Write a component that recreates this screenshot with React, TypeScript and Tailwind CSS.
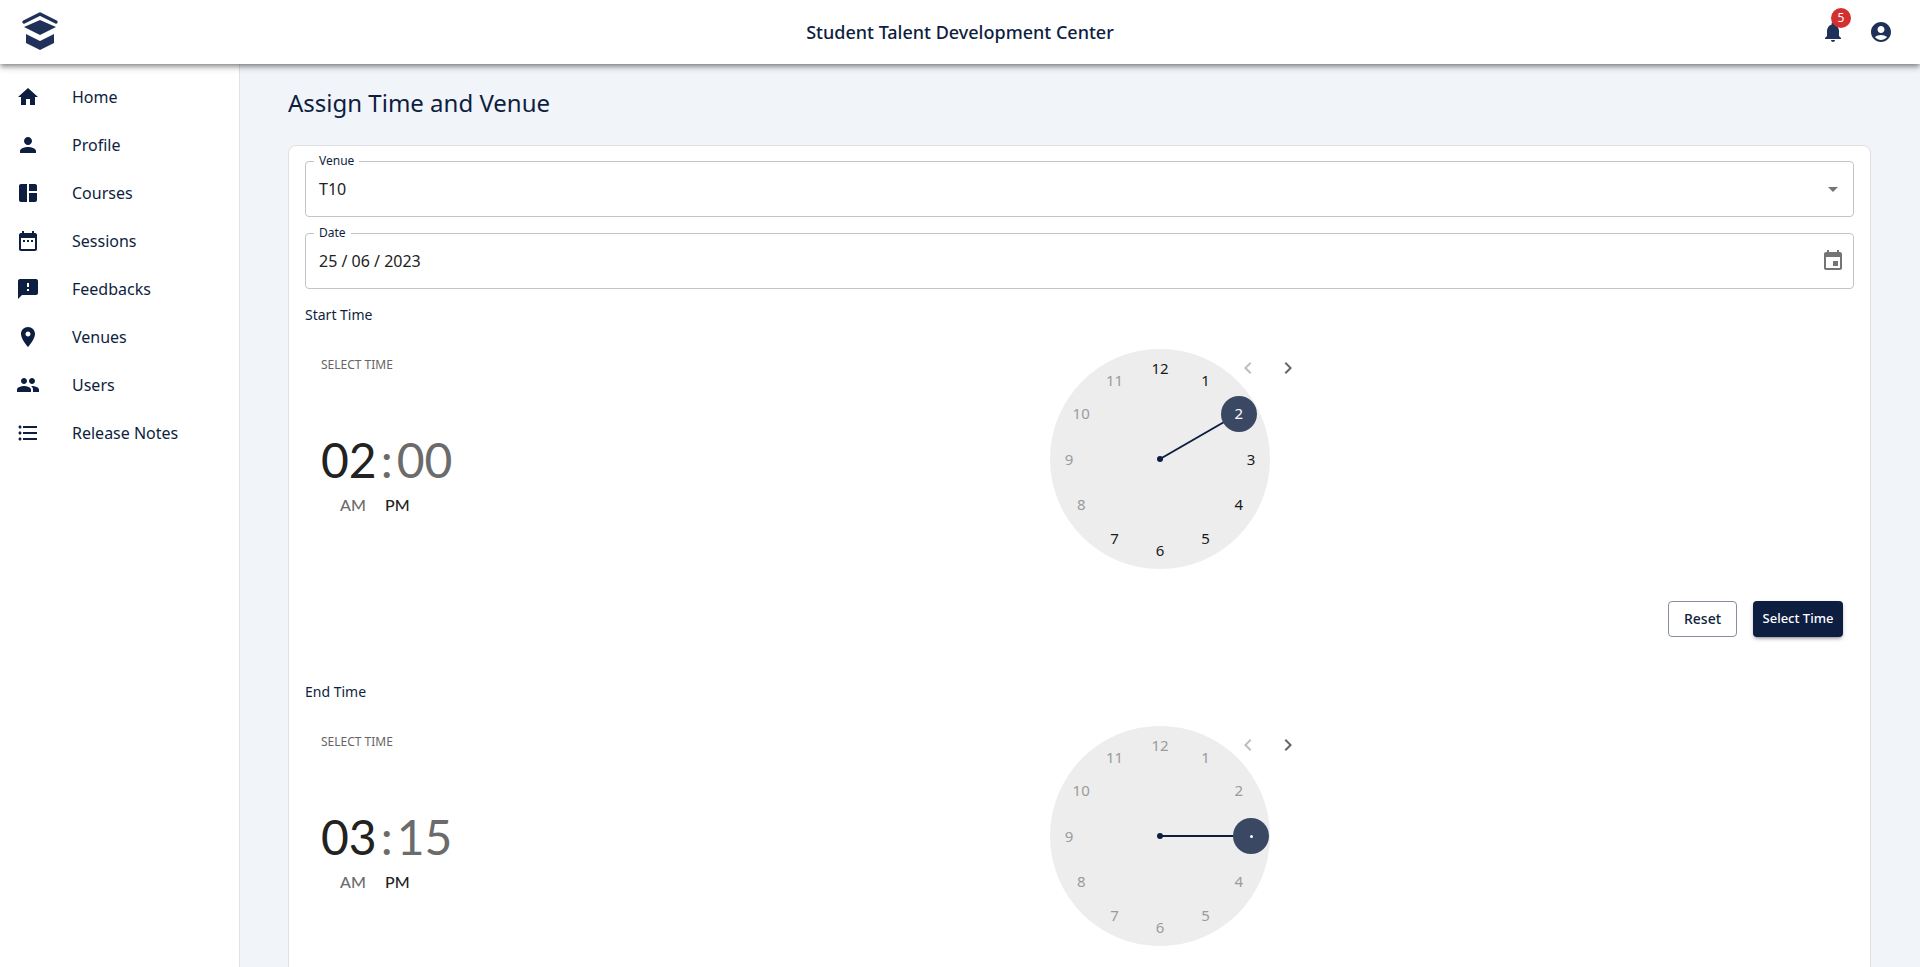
import React from "react";

const navy = "#0e1e40";

const Icon = ({ d, className }: { d: string; className?: string }) => (
    <svg viewBox="0 0 24 24" fill="currentColor" className={className}>
        <path d={d}/>
    </svg>
);

const navItems = [
    { label: "Home", d: "M10 20v-6h4v6h5v-8h3L12 3 2 12h3v8z" },
    { label: "Profile", d: "M12 12c2.21 0 4-1.79 4-4s-1.79-4-4-4-4 1.79-4 4 1.79 4 4 4zm0 2c-2.67 0-8 1.34-8 4v2h16v-2c0-2.66-5.33-4-8-4z" },
    { label: "Courses", d: "M11 21H5c-1.1 0-2-.9-2-2V5c0-1.1.9-2 2-2h6v18zm2 0h6c1.1 0 2-.9 2-2v-7h-8v9zm8-11V5c0-1.1-.9-2-2-2h-6v7h8z" },
    { label: "Sessions", d: "M9 11H7v2h2v-2zm4 0h-2v2h2v-2zm4 0h-2v2h2v-2zm2-7h-1V2h-2v2H8V2H6v2H5c-1.11 0-1.99.9-1.99 2L3 20c0 1.1.89 2 2 2h14c1.1 0 2-.9 2-2V6c0-1.1-.9-2-2-2zm0 16H5V9h14v11z" },
    { label: "Feedbacks", d: "M20 2H4c-1.1 0-1.99.9-1.99 2L2 22l4-4h14c1.1 0 2-.9 2-2V4c0-1.1-.9-2-2-2zm-7 12h-2v-2h2v2zm0-4h-2V6h2v4z" },
    { label: "Venues", d: "M12 2C8.13 2 5 5.13 5 9c0 5.25 7 13 7 13s7-7.75 7-13c0-3.87-3.13-7-7-7zm0 9.5c-1.38 0-2.5-1.12-2.5-2.5s1.12-2.5 2.5-2.5 2.5 1.12 2.5 2.5-1.12 2.5-2.5 2.5z" },
    { label: "Users", d: "M16 11c1.66 0 2.99-1.34 2.99-3S17.66 5 16 5c-1.66 0-3 1.34-3 3s1.34 3 3 3zm-8 0c1.66 0 2.99-1.34 2.99-3S9.66 5 8 5C6.34 5 5 6.34 5 8s1.34 3 3 3zm0 2c-2.33 0-7 1.17-7 3.5V19h14v-2.5c0-2.33-4.67-3.5-7-3.5zm8 0c-.29 0-.62.02-.97.05 1.16.84 1.97 1.97 1.97 3.45V19h6v-2.5c0-2.33-4.67-3.5-7-3.5z" },
    { label: "Release Notes", d: "M4 10.5c-.83 0-1.5.67-1.5 1.5s.67 1.5 1.5 1.5 1.5-.67 1.5-1.5-.67-1.5-1.5-1.5zm0-6c-.83 0-1.5.67-1.5 1.5S3.17 7.5 4 7.5 5.5 6.83 5.5 6 4.83 4.5 4 4.5zm0 12c-.83 0-1.5.68-1.5 1.5s.68 1.5 1.5 1.5 1.5-.68 1.5-1.5-.67-1.5-1.5-1.5zM7 19h14v-2H7v2zm0-6h14v-2H7v2zm0-8v2h14V5H7z" },
];

const Logo = () => (
    <svg viewBox="0 0 48 46" className="w-12 h-[46px]" fill="#1f3158">
        <path d="M4 11 20 3 36 11" fill="none" stroke="#1f3158" strokeWidth="3.4" strokeLinecap="round" strokeLinejoin="round"/>
        <path d="M20 9 36 16 20 24 4 16z"/>
        <path d="M6 23 20 30 34 23V32L20 39 6 32z"/>
    </svg>
);

const Field = ({ label, children }: { label: string; children: React.ReactNode }) => (
    <div className="relative h-14 border border-[#c4c4c4] rounded flex items-center justify-between pl-[13px] pr-[8px]">
        <span className="absolute -top-[9px] left-[8px] bg-white px-[5px] text-xs leading-4 text-[#0e1e40]">{label}</span>
        {children}
    </div>
);

const Clock = ({ hour, enabled, dot }: { hour: number; enabled: number[]; dot?: boolean }) => {
    const angle = (hour % 12) * 30;
    const rad = (angle * Math.PI) / 180;
    const thumbX = 91 * Math.sin(rad);
    const thumbY = -91 * Math.cos(rad);
    return (
        <div className="relative w-[220px] h-[220px] rounded-full bg-[#ededed]">
            {Array.from({ length: 12 }, (_, i) => i + 1).map((n) => {
                const a = (n * 30 * Math.PI) / 180;
                return (
                    <span
                        key={n}
                        className={`absolute w-9 h-9 -ml-[18px] -mt-[18px] flex items-center justify-center text-[15px] ${enabled.includes(n) ? "text-[#1a1a1a]" : "text-[#9b9b9b]"}`}
                        style={{ left: 110 + 91 * Math.sin(a), top: 110 - 91 * Math.cos(a) }}
                    >
                        {n}
                    </span>
                );
            })}
            <div className="absolute left-[107px] top-[107px] w-[6px] h-[6px] rounded-full bg-[#0e1e40]"/>
            <div
                className="absolute left-[110px] top-[109px] h-[2px] w-[91px] bg-[#0e1e40] origin-[0_50%]"
                style={{ transform: `rotate(${angle - 90}deg)` }}
            />
            <div
                className="absolute w-9 h-9 -ml-[18px] -mt-[18px] rounded-full bg-[#3a4863] flex items-center justify-center text-[15px] text-white"
                style={{ left: 110 + thumbX, top: 110 + thumbY }}
            >
                {dot ? <span className="w-[3px] h-[3px] rounded-full bg-white"/> : hour}
            </div>
            <svg viewBox="0 0 24 24" fill="currentColor" className="absolute left-[186px] top-[7px] w-6 h-6 text-[#bdbdbd]">
                <path d="M15.41 7.41 14 6l-6 6 6 6 1.41-1.41L10.83 12z"/>
            </svg>
            <svg viewBox="0 0 24 24" fill="currentColor" className="absolute left-[226px] top-[7px] w-6 h-6 text-[#666]">
                <path d="M10 6 8.59 7.41 13.17 12l-4.58 4.59L10 18l6-6z"/>
            </svg>
        </div>
    );
};

const TimePicker = (
    {
        title,
        hours,
        minutes,
        hour,
        enabled,
        dot
    }: {
        title: string;
        hours: string;
        minutes: string;
        hour: number;
        enabled: number[];
        dot?: boolean;
    }) => (
    <div>
        <p className="h-5 text-sm leading-5 text-[#0e1e40]">{title}</p>
        <div className="flex">
            <div className="w-[161px] shrink-0 pl-4 pt-[30px]">
                <p className="h-5 text-xs leading-5 text-[#666]">SELECT TIME</p>
                <div className="mt-[57px] h-14 flex items-center text-[48px] leading-none text-[#222] font-['Lato']">
                    <span>{hours}</span>
                    <span className="text-[#6b6b6b] mx-[4px]">:</span>
                    <span className="text-[#6b6b6b]">{minutes}</span>
                </div>
                <div className="mt-[7px] h-5 flex text-base leading-5 font-['Lato'] font-medium">
                    <span className="w-16 pl-[19px] text-[#6b6b6b]">AM</span>
                    <span className="text-[#222]">PM</span>
                </div>
            </div>
            <div className="flex-1 flex flex-col">
                <div className="flex justify-center pt-6">
                    <Clock hour={hour} enabled={enabled} dot={dot}/>
                </div>
            </div>
        </div>
        <div className="flex justify-end gap-4 mt-8 pr-[11px]">
            <button className="h-9 w-[69px] rounded border border-[#868ea0] bg-white text-sm font-medium text-[#0e1e40]">Reset</button>
            <button className="h-9 w-[90px] rounded bg-[#0e1e40] text-[13px] font-medium text-white shadow-[0_3px_3px_-2px_rgba(0,0,0,.3),0_2px_4px_rgba(0,0,0,.2)]">Select Time</button>
        </div>
    </div>
);

export default function App() {
    return (
        <div className="h-screen flex flex-col overflow-hidden bg-[#f1f4f9] font-['Noto_Sans',sans-serif]" style={{ color: navy }}>
            <header className="relative z-10 h-16 shrink-0 bg-white flex items-center justify-between shadow-[0_2px_4px_-1px_rgba(0,0,0,.3),0_4px_5px_rgba(0,0,0,.2),0_1px_10px_rgba(0,0,0,.12)]">
                <div className="pl-5 pt-[3px]"><Logo/></div>
                <h1 className="absolute inset-x-0 text-center text-lg font-medium text-[#0e1e40]">Student Talent Development Center</h1>
                <div className="relative flex items-center gap-6 pr-[27px] text-[#1f3158]">
                    <div className="relative">
                        <Icon d="M12 22c1.1 0 2-.9 2-2h-4c0 1.1.89 2 2 2zm6-6v-5c0-3.07-1.64-5.64-4.5-6.32V4c0-.83-.67-1.5-1.5-1.5s-1.5.67-1.5 1.5v.68C7.63 5.36 6 7.92 6 11v5l-2 2v1h16v-1l-2-2z" className="w-6 h-6"/>
                        <span className="absolute -top-[12px] left-[10px] w-5 h-5 rounded-full bg-[#d32f2f] text-white text-xs flex items-center justify-center">5</span>
                    </div>
                    <Icon d="M12 2C6.48 2 2 6.48 2 12s4.48 10 10 10 10-4.48 10-10S17.52 2 12 2zm0 4c1.93 0 3.5 1.57 3.5 3.5S13.93 13 12 13s-3.5-1.57-3.5-3.5S10.07 6 12 6zm0 14c-2.03 0-4.43-.82-6.14-2.88C7.55 15.8 9.68 15 12 15s4.45.8 6.14 2.12C16.43 19.18 14.03 20 12 20z" className="w-6 h-6"/>
                </div>
            </header>
            <div className="flex-1 flex min-h-0">
                <aside className="w-[240px] shrink-0 bg-white border-r border-[#dfe2e8] pt-[9px]">
                    {navItems.map((item) => (
                        <div key={item.label} className="h-12 flex items-center pl-4 text-[#0e1e40]">
                            <Icon d={item.d} className="w-6 h-6 mr-8"/>
                            <span className="text-base">{item.label}</span>
                        </div>
                    ))}
                </aside>
                <main className="flex-1 min-w-0 pl-12 pr-[49px] overflow-hidden">
                    <h2 className="mt-[21px] h-9 text-2xl leading-9 text-[#0e1e40]">Assign Time and Venue</h2>
                    <div className="mt-6 bg-white border border-[#e0e0e0] rounded-lg p-4 pt-[15px]">
                        <div className="flex flex-col gap-4">
                            <Field label="Venue">
                                <span className="text-base text-[#222]">T10</span>
                                <Icon d="M7 10l5 5 5-5z" className="w-6 h-6 text-[#757575]"/>
                            </Field>
                            <Field label="Date">
                                <span className="text-base text-[#222]">25 / 06 / 2023</span>
                                <Icon d="M17 12h-5v5h5v-5zM16 1v2H8V1H6v2H5c-1.11 0-1.99.9-1.99 2L3 19c0 1.1.89 2 2 2h14c1.1 0 2-.9 2-2V5c0-1.1-.9-2-2-2h-1V1h-2zm3 18H5V8h14v11z" className="w-6 h-6 text-[#757575]"/>
                            </Field>
                            <TimePicker title="Start Time" hours="02" minutes="00" hour={2} enabled={[12, 1, 3, 4, 5, 6, 7]}/>
                        </div>
                        <div className="mt-[45px]">
                            <TimePicker title="End Time" hours="03" minutes="15" hour={3} enabled={[]} dot/>
                        </div>
                    </div>
                </main>
            </div>
        </div>
    );
}
